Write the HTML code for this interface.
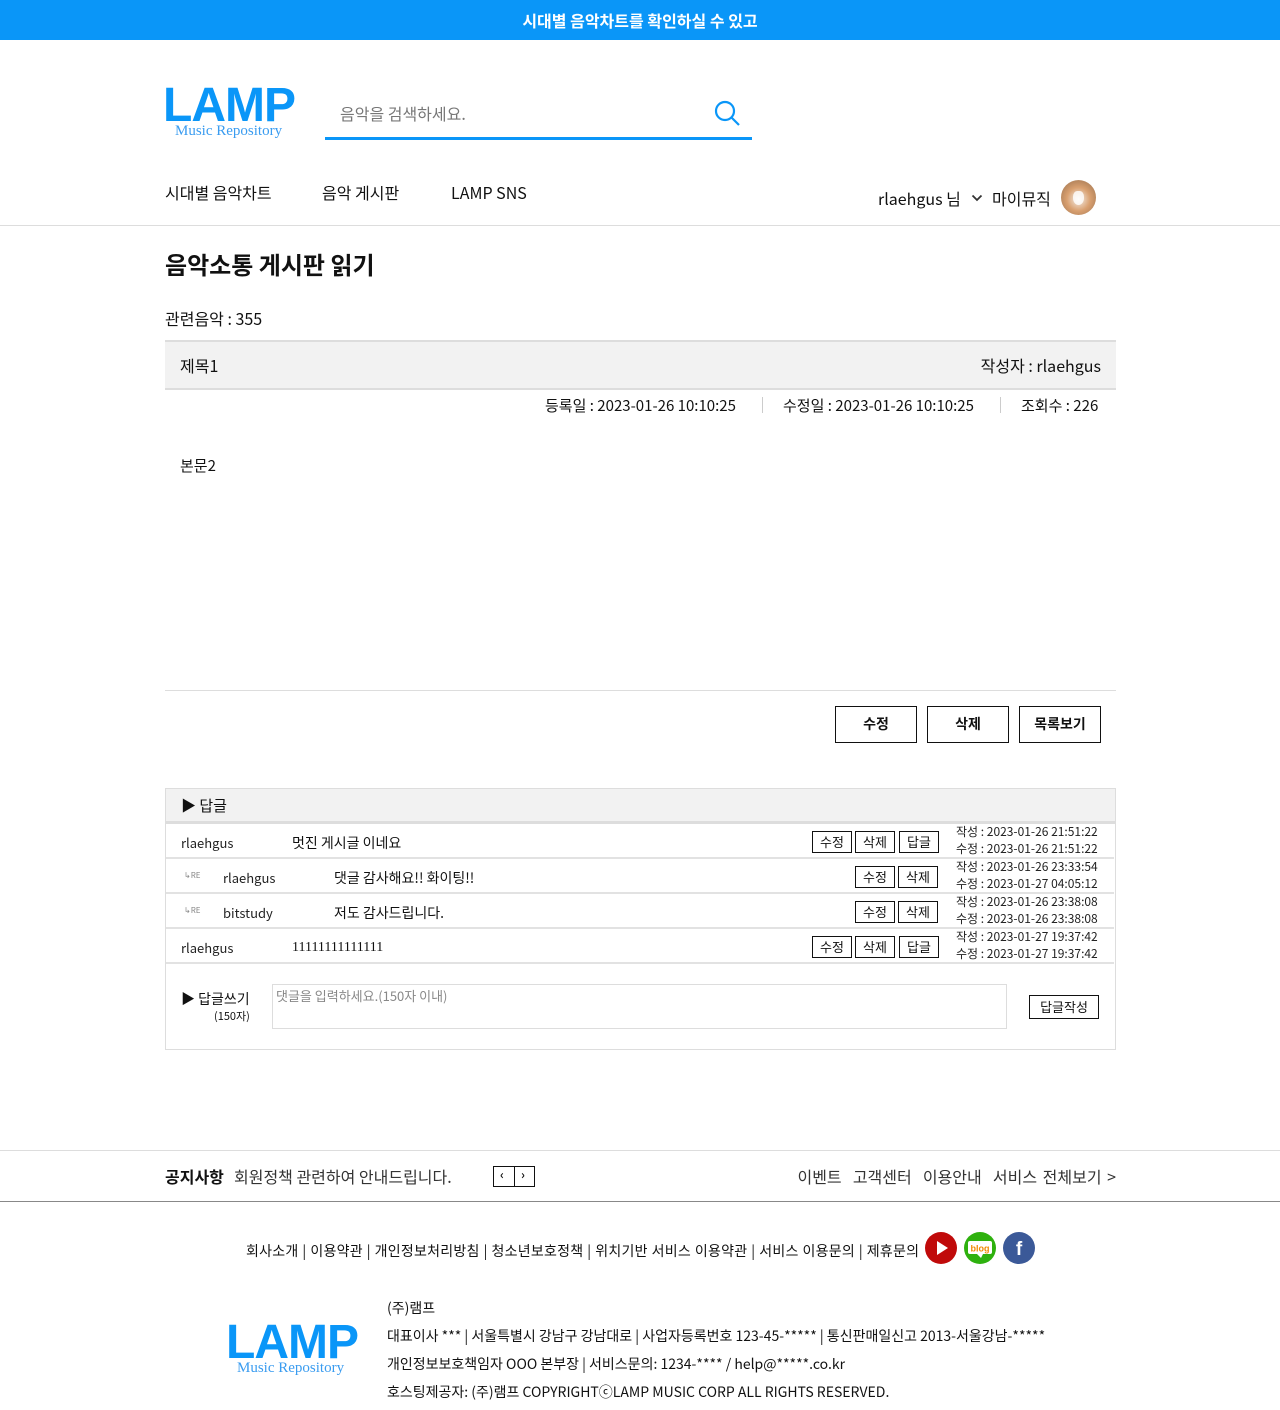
<!DOCTYPE html>
<html><head><meta charset="utf-8"><style>
*{margin:0;padding:0;box-sizing:border-box}
body{width:1280px;height:1410px;position:relative;background:#fff;font-family:"Noto Sans CJK KR","Liberation Sans",sans-serif;color:#111;overflow:hidden;line-height:1.2}
.a{position:absolute;white-space:nowrap}
.btn{position:absolute;border:1px solid #111;background:#fff;font-size:14px;font-weight:bold;text-align:center;line-height:35px;width:82px;height:37px}
.sb{position:absolute;border:1px solid #111;width:40px;height:22px;font-size:13px;text-align:center;line-height:20px}
.row{position:absolute;left:166px;width:948px;height:35px;border-bottom:2px solid #e2e2e2}
.t{font-size:12px;color:#222}
</style></head><body>
<div class="a" style="left:0;top:0;width:1280px;height:40px;background:#0a96f8;color:#fff;font-size:16px;font-weight:bold;text-align:center;line-height:40px">시대별 음악차트를 확인하실 수 있고</div>

<div class="a" style="left:163px;top:80px;font-family:'Liberation Sans',sans-serif;font-size:48px;font-weight:bold;color:#0a96f8;letter-spacing:-1px;line-height:52px">LAMP</div>
<div class="a" style="left:175px;top:122px;font-family:'Liberation Serif',serif;font-size:15px;color:#3a9cf0">Music Repository</div>

<div class="a" style="left:340px;top:104px;font-size:16px;color:#777">음악을 검색하세요.</div>
<div class="a" style="left:325px;top:137px;width:427px;height:3px;background:#0a96f8"></div>
<svg class="a" style="left:712px;top:99px" width="30" height="30" viewBox="0 0 30 30"><circle cx="13" cy="12" r="9" fill="none" stroke="#0a96f8" stroke-width="2.2"/><line x1="19.5" y1="18.5" x2="27" y2="26" stroke="#0a96f8" stroke-width="2.2"/></svg>

<div class="a" style="left:165px;top:183px;font-size:16px">시대별 음악차트</div>
<div class="a" style="left:322px;top:183px;font-size:16px">음악 게시판</div>
<div class="a" style="left:451px;top:183px;font-size:16px">LAMP SNS</div>
<div class="a" style="left:878px;top:189px;font-size:16px">rlaehgus 님</div>
<svg class="a" style="left:971px;top:193px" width="12" height="10"><polyline points="1.5,2.5 6,7 10.5,2.5" fill="none" stroke="#333" stroke-width="1.8"/></svg>
<div class="a" style="left:992px;top:189px;font-size:16px">마이뮤직</div>
<div class="a" style="left:1061px;top:180px;width:35px;height:35px;border-radius:50%;background:radial-gradient(circle at 50% 55%,#f4efe9 0,#d9a070 45%,#b9885f 70%,#c9c2bb 100%)"></div>
<div class="a" style="left:1073px;top:191px;width:11px;height:14px;border-radius:40% 40% 50% 50%;background:#fff;opacity:.8"></div>
<div class="a" style="left:0;top:225px;width:1280px;height:1px;background:#ddd"></div>

<div class="a" style="left:165px;top:250px;font-size:24px;font-weight:bold">음악소통 게시판 읽기</div>
<div class="a" style="left:165px;top:309px;font-size:16px">관련음악 : 355</div>

<div class="a" style="left:165px;top:340px;width:951px;height:50px;background:#f2f2f2;border-top:2px solid #ddd;border-bottom:2px solid #ddd"></div>
<div class="a" style="left:180px;top:356px;font-size:16px">제목1</div>
<div class="a" style="right:179px;top:356px;font-size:16px">작성자 : rlaehgus</div>
<div class="a" style="left:545px;top:397px;font-size:15px">등록일 : 2023-01-26 10:10:25</div>
<div class="a" style="left:762px;top:397px;width:1px;height:16px;background:#ccc"></div>
<div class="a" style="left:783px;top:397px;font-size:15px">수정일 : 2023-01-26 10:10:25</div>
<div class="a" style="left:1000px;top:397px;width:1px;height:16px;background:#ccc"></div>
<div class="a" style="left:1021px;top:397px;font-size:15px">조회수 : 226</div>
<div class="a" style="left:180px;top:457px;font-size:15px">본문2</div>
<div class="a" style="left:165px;top:690px;width:951px;height:1px;background:#ddd"></div>

<div class="btn" style="left:835px;top:706px">수정</div>
<div class="btn" style="left:927px;top:706px">삭제</div>
<div class="btn" style="left:1019px;top:706px">목록보기</div>

<div class="a" style="left:165px;top:788px;width:951px;height:262px;border:1px solid #ddd"></div>
<div class="a" style="left:166px;top:789px;width:949px;height:35px;background:#f2f2f2;border-bottom:3px solid #ddd"></div>
<div class="a" style="left:181px;top:797px;font-size:15px">▶ 답글</div>

<div class="row" style="top:824px"></div>
<div class="row" style="top:859px"></div>
<div class="row" style="top:894px"></div>
<div class="row" style="top:929px"></div>

<div class="a t" style="left:181px;top:835px;font-size:13px">rlaehgus</div>
<div class="a" style="left:292px;top:835px;font-size:14px">멋진 게시글 이네요</div>
<div class="sb" style="left:812px;top:831px">수정</div><div class="sb" style="left:855px;top:831px">삭제</div><div class="sb" style="left:899px;top:831px">답글</div>
<div class="a t" style="left:956px;top:825px">작성 : 2023-01-26 21:51:22</div><div class="a t" style="left:956px;top:842px">수정 : 2023-01-26 21:51:22</div>

<div class="a" style="left:184px;top:871px;font-size:8px;color:#888">↳RE</div>
<div class="a t" style="left:223px;top:870px;font-size:13px">rlaehgus</div>
<div class="a" style="left:334px;top:870px;font-size:14px">댓글 감사해요!! 화이팅!!</div>
<div class="sb" style="left:855px;top:866px">수정</div><div class="sb" style="left:898px;top:866px">삭제</div>
<div class="a t" style="left:956px;top:860px">작성 : 2023-01-26 23:33:54</div><div class="a t" style="left:956px;top:877px">수정 : 2023-01-27 04:05:12</div>

<div class="a" style="left:184px;top:906px;font-size:8px;color:#888">↳RE</div>
<div class="a t" style="left:223px;top:905px;font-size:13px">bitstudy</div>
<div class="a" style="left:334px;top:905px;font-size:14px">저도 감사드립니다.</div>
<div class="sb" style="left:855px;top:901px">수정</div><div class="sb" style="left:898px;top:901px">삭제</div>
<div class="a t" style="left:956px;top:895px">작성 : 2023-01-26 23:38:08</div><div class="a t" style="left:956px;top:912px">수정 : 2023-01-26 23:38:08</div>

<div class="a t" style="left:181px;top:940px;font-size:13px">rlaehgus</div>
<div class="a" style="left:292px;top:940px;font-size:14px;font-family:'Liberation Serif',serif">11111111111111</div>
<div class="sb" style="left:812px;top:936px">수정</div><div class="sb" style="left:855px;top:936px">삭제</div><div class="sb" style="left:899px;top:936px">답글</div>
<div class="a t" style="left:956px;top:930px">작성 : 2023-01-27 19:37:42</div><div class="a t" style="left:956px;top:947px">수정 : 2023-01-27 19:37:42</div>

<div class="a" style="left:181px;top:991px;font-size:14px">▶ 답글쓰기</div>
<div class="a" style="left:214px;top:1010px;font-size:11px">(150자)</div>
<div class="a" style="left:272px;top:984px;width:735px;height:45px;border:1px solid #ddd"></div>
<div class="a" style="left:276px;top:988px;font-size:13px;color:#888">댓글을 입력하세요.(150자 이내)</div>
<div class="a" style="left:1029px;top:995px;width:70px;height:24px;border:1px solid #111;font-size:13px;text-align:center;line-height:22px">답글작성</div>

<div class="a" style="left:0;top:1150px;width:1280px;height:1px;background:#ddd"></div>
<div class="a" style="left:165px;top:1167px;font-size:16px;font-weight:bold">공지사항</div>
<div class="a" style="left:234px;top:1167px;font-size:16px;color:#333">회원정책 관련하여 안내드립니다.</div>
<div class="a" style="left:493px;top:1166px;width:42px;height:21px;border:1px solid #111"></div>
<div class="a" style="left:514px;top:1166px;width:1px;height:21px;background:#111"></div>
<div class="a" style="left:500px;top:1168px;font-size:12px;font-weight:bold">‹</div>
<div class="a" style="left:521px;top:1168px;font-size:12px;font-weight:bold">›</div>
<div class="a" style="right:164px;top:1167px;font-size:16px;color:#333;word-spacing:2px">이벤트&nbsp; 고객센터&nbsp; 이용안내&nbsp; 서비스 전체보기 &gt;</div>
<div class="a" style="left:0;top:1201px;width:1280px;height:1px;background:#888"></div>

<div class="a" style="left:246px;top:1243px;font-size:14px;letter-spacing:0.25px;word-spacing:0.5px">회사소개 | 이용약관 | 개인정보처리방침 | 청소년보호정책 | 위치기반 서비스 이용약관 | 서비스 이용문의 | 제휴문의</div>
<svg class="a" style="left:925px;top:1232px" width="112" height="33">
<circle cx="16" cy="16" r="16" fill="#c00a0a"/><polygon points="12,9 12,23 23,16" fill="#fff"/>
<circle cx="55" cy="16" r="16" fill="#2eb10e"/><rect x="43" y="9" width="24" height="13" rx="2" fill="#fff"/><polygon points="52,22 56,26 58,22" fill="#fff"/><text x="55" y="19.5" font-size="9" font-weight="bold" fill="#f08a00" text-anchor="middle" font-family="Liberation Sans,sans-serif">blog</text>
<circle cx="94" cy="16" r="16" fill="#3b5998"/><text x="94" y="23" font-size="19" font-weight="bold" fill="#fff" text-anchor="middle" font-family="Liberation Sans,sans-serif">f</text>
</svg>

<div class="a" style="left:226px;top:1317px;font-family:'Liberation Sans',sans-serif;font-size:48px;font-weight:bold;color:#0a96f8;letter-spacing:-1px;line-height:52px">LAMP</div>
<div class="a" style="left:237px;top:1359px;font-family:'Liberation Serif',serif;font-size:15px;color:#3a9cf0">Music Repository</div>
<div class="a" style="left:387px;top:1300px;font-size:14px">(주)램프</div>
<div class="a" style="left:387px;top:1328px;font-size:14px">대표이사 *** | 서울특별시 강남구 강남대로 | 사업자등록번호 123-45-***** | 통신판매일신고 2013-서울강남-*****</div>
<div class="a" style="left:387px;top:1356px;font-size:14px">개인정보보호책임자 OOO 본부장 | 서비스문의: 1234-**** / help@*****.co.kr</div>
<div class="a" style="left:387px;top:1384px;font-size:14px">호스팅제공자: (주)램프 COPYRIGHTⓒLAMP MUSIC CORP ALL RIGHTS RESERVED.</div>
</body></html>
